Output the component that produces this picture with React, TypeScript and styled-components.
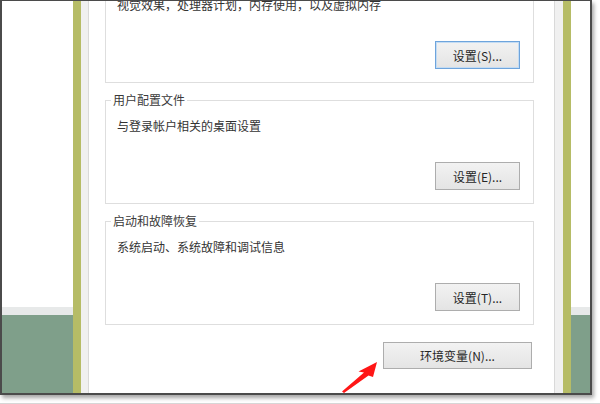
import styled, { createGlobalStyle } from "styled-components"

const GlobalStyle = createGlobalStyle`
  html, body {
    margin: 0;
    padding: 0;
    background: #ffffff;
  }
  body {
    font-family: "Noto Sans CJK SC", "Noto Sans", sans-serif;
  }
`

interface SettingGroup {
    title: string
    text: string
    button: string
    isDefault?: boolean
}

const groups: SettingGroup[] = [
    { title: '性能', text: '视觉效果，处理器计划，内存使用，以及虚拟内存', button: '设置(S)...', isDefault: true },
    { title: '用户配置文件', text: '与登录帐户相关的桌面设置', button: '设置(E)...' },
    { title: '启动和故障恢复', text: '系统启动、系统故障和调试信息', button: '设置(T)...' },
]

export default function App() {
    return (
        <>
            <GlobalStyle />
            <Page>
                <Screen>
                    <Desktop $width={71}>
                        <DesktopTop />
                        <DesktopEdge />
                        <DesktopGround />
                    </Desktop>
                    <WindowBorder />
                    <WindowBody>
                        <Dialog>
                            {groups.map((g) => (
                                <Group key={g.title}>
                                    <Legend>{g.title}</Legend>
                                    <Description>{g.text}</Description>
                                    <GroupButton $isDefault={g.isDefault}>{g.button}</GroupButton>
                                </Group>
                            ))}
                            <EnvButton>环境变量(N)...</EnvButton>
                        </Dialog>
                    </WindowBody>
                    <WindowBorder />
                    <Desktop $width={19}>
                        <DesktopTop />
                        <DesktopEdge />
                        <DesktopGround />
                    </Desktop>
                </Screen>
                <Arrow viewBox="336 356 48 42" width="48" height="42">
                    <polygon
                        points="377,362 373,377 368.5,375.5 344,393 342,391.5 364,372.5 358.5,371.5"
                        fill="#ff1616"
                    />
                </Arrow>
            </Page>
        </>
    )
}

const Page = styled.div`
    position: relative;
    width: 600px;
    height: 404px;
    box-sizing: border-box;
    overflow: hidden;
    background: #ffffff;
    border-bottom: 1px solid #d6d6d6;
`

const Screen = styled.div`
    width: 592px;
    height: 395px;
    box-sizing: border-box;
    display: flex;
    overflow: hidden;
    border: solid #4b4b4b;
    border-width: 1px 2px 2px 2px;
    box-shadow: 2px 3px 4px rgba(0, 0, 0, 0.35);
`

const Desktop = styled.div<{ $width: number }>`
    width: ${props => props.$width}px;
    flex-shrink: 0;
    display: flex;
    flex-direction: column;
`

const DesktopTop = styled.div`
    height: 306px;
    background: #ffffff;
`

const DesktopEdge = styled.div`
    height: 8px;
    background: #e7e9e9;
`

const DesktopGround = styled.div`
    flex: 1;
    background: #7f9f8a;
`

const WindowBorder = styled.div`
    width: 8px;
    flex-shrink: 0;
    background: #b6bc66;
`

const WindowBody = styled.div`
    flex: 1;
    display: flex;
    padding: 0 8px 0 7px;
    background: #f0f0f0;
`

const Dialog = styled.div`
    flex: 1;
    display: flex;
    flex-direction: column;
    gap: 10px;
    padding: 0 20px 0 16px;
    background: #ffffff;
    border-left: 1px solid #d9d9d9;
    border-right: 1px solid #d9d9d9;

    & > :first-child {
        margin-top: -29px;
    }
`

const Group = styled.fieldset`
    margin: 0;
    min-width: 0;
    padding: 11px 13px 13px 11px;
    display: flex;
    flex-direction: column;
    border: 1px solid #dedede;
`

const Legend = styled.legend`
    margin-left: -6px;
    padding: 0 2px;
    font-size: 12px;
    line-height: 14px;
    color: #3a3a3a;
`

const Description = styled.p`
    margin: 0;
    font-size: 12px;
    line-height: 16px;
    color: #333333;
`

const BaseButton = styled.button`
    align-self: flex-end;
    padding: 0;
    font-family: inherit;
    font-size: 12px;
    color: #262626;
    border: 1px solid #adadad;
    background: linear-gradient(#f2f2f2, #e4e4e4);
`

const GroupButton = styled(BaseButton)<{ $isDefault?: boolean }>`
    margin-top: 28px;
    width: 85px;
    height: 28px;
    border-color: ${props => props.$isDefault ? '#6ea4dc' : '#adadad'};
    box-shadow: ${props => props.$isDefault ? 'inset 0 0 0 1px #c4dcf3' : 'none'};
`

const EnvButton = styled(BaseButton)`
    margin-top: 7px;
    margin-right: 2px;
    width: 149px;
    height: 27px;
`

const Arrow = styled.svg`
    position: absolute;
    left: 336px;
    top: 356px;
    pointer-events: none;
`
